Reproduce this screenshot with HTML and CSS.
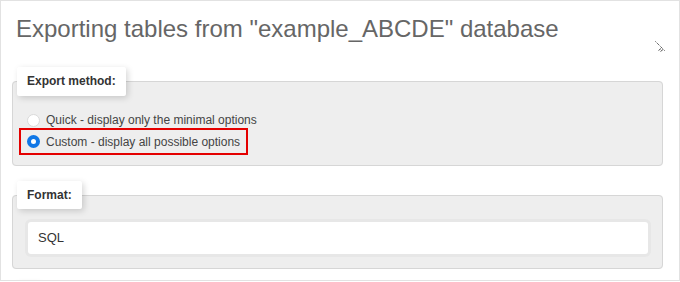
FILE: index.html
```html
<!DOCTYPE html>
<html lang="en">

<head>
    <meta charset="UTF-8">
    <title>Export</title>
    <link rel="stylesheet" href="styles.css">
</head>

<body>
    <div class="page">
        <h2 class="title">Exporting tables from "example_ABCDE" database</h2>

        <svg class="cursor" width="14" height="14" viewBox="0 0 14 14">
            <path d="M1.5 1.5 L10.5 10.5" stroke="#222" stroke-width="1" stroke-dasharray="1 1" fill="none"/>
            <path d="M4.5 10.5 L7 8.5 M6.5 11.5 L9 9.5" stroke="#555" stroke-width="1" fill="none"/>
        </svg>

        <fieldset class="group">
            <legend>Export method:</legend>
            <div class="options">
                <label class="option">
                    <input type="radio" name="method"> Quick - display only the minimal options
                </label>
                <label class="option highlight">
                    <input type="radio" name="method" checked> Custom - display all possible options
                </label>
            </div>
        </fieldset>

        <fieldset class="group format">
            <legend>Format:</legend>
            <div class="select">SQL</div>
        </fieldset>

        <fieldset class="group next">
            <legend>&nbsp;</legend>
        </fieldset>
    </div>
</body>

</html>
```

FILE: styles.css
```css
body {
    margin: 0;
    font-family: "Liberation Sans", Arial, sans-serif;
    color: #444;
    background: #fff;
}

.page {
    position: relative;
    box-sizing: border-box;
    width: 680px;
    height: 281px;
    border: 1px solid #e2e2e2;
    padding: 0 16px 0 11px;
    overflow: hidden;
}

.title {
    margin: 14px 0 0 4px;
    font-size: 24px;
    line-height: 28px;
    font-weight: normal;
    color: #666;
    height: 36px;
}

.cursor {
    position: absolute;
    left: 653px;
    top: 39px;
}

.group {
    margin: 16px 0 0 0;
    padding: 0;
    background: #eee;
    border: 1px solid #d6d6d6;
    border-radius: 4px;
}

.group legend {
    margin-left: 4px;
    padding: 0 10px;
    height: 29px;
    line-height: 29px;
    box-sizing: border-box;
    background: #fff;
    font-size: 12px;
    font-weight: bold;
    color: #333;
    box-shadow: 2px 2px 6px rgba(0, 0, 0, 0.16);
    border-radius: 2px;
}

.options {
    padding: 13px 0 10px 6px;
}

.option {
    display: flex;
    align-items: center;
    width: fit-content;
    height: 18px;
    padding-right: 6px;
    font-size: 12px;
    white-space: nowrap;
    color: #444;
    border: 2px solid transparent;
}

.option input {
    appearance: none;
    box-sizing: border-box;
    width: 13px;
    height: 13px;
    margin: 0 6px;
    border-radius: 50%;
    border: 1px solid #dadada;
    background: #fff;
}

.option input:checked {
    border: 4px solid #1177e6;
}

.highlight {
    margin-top: -3px;
    height: 23px;
    border-color: #e40000;
}

.format {
    margin-top: 15px;
}

.format legend {
    height: 28px;
    line-height: 28px;
}

.select {
    margin: 13px 14px 14px 15px;
    height: 32px;
    line-height: 32px;
    padding-left: 10px;
    background: #fff;
    font-size: 13px;
    color: #333;
    border-radius: 3px;
    box-shadow: 0 0 0 3px #e7e7e7;
}

.next {
    margin-top: 13px;
    background: #fff;
    border: none;
}
```
